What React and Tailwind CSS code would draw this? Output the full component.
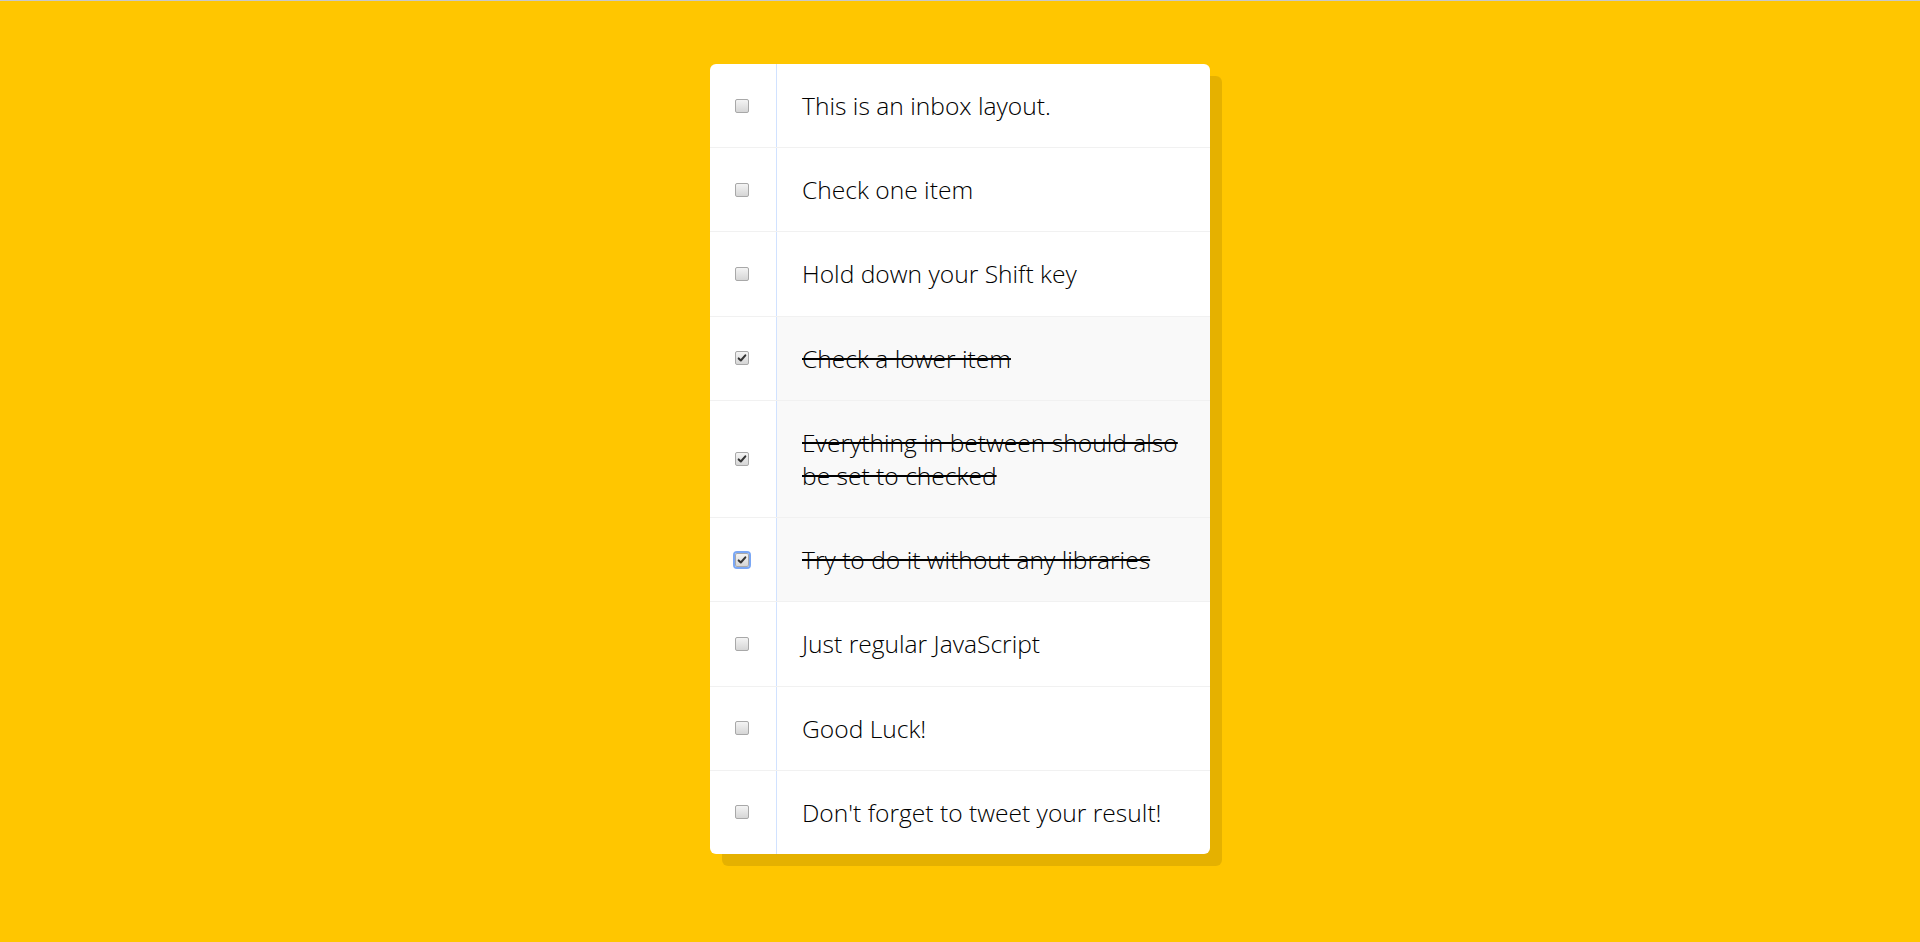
import { useState } from 'react';

const initialItems = [
  { id: 1, text: 'This is an inbox layout.', done: false },
  { id: 2, text: 'Check one item', done: false },
  { id: 3, text: 'Hold down your Shift key', done: false },
  { id: 4, text: 'Check a lower item', done: true },
  { id: 5, text: 'Everything in between should also be set to checked', done: true },
  { id: 6, text: 'Try to do it without any libraries', done: true, focused: true },
  { id: 7, text: 'Just regular JavaScript', done: false },
  { id: 8, text: 'Good Luck!', done: false },
  { id: 9, text: "Don't forget to tweet your result!", done: false },
];

function Checkbox({ checked, focused, onClick }) {
  return (
    <button
      onClick={onClick}
      className={`relative flex h-[14px] w-[14px] shrink-0 items-center justify-center rounded-[2px] border border-[#a8a8a8] bg-gradient-to-b from-[#f4f4f4] to-[#d6d6d6] ${
        focused ? 'outline outline-2 outline-[#7aa7f5]' : ''
      }`}
    >
      {checked && (
        <svg viewBox="0 0 12 12" className="h-[10px] w-[10px]">
          <path d="M2 6.5 L4.6 9 L10 2.8" fill="none" stroke="#333" strokeWidth="2.4" strokeLinecap="round" strokeLinejoin="round" />
        </svg>
      )}
    </button>
  );
}

export default function App() {
  const [items, setItems] = useState(initialItems);

  const toggle = (id) =>
    setItems((list) => list.map((it) => (it.id === id ? { ...it, done: !it.done } : it)));

  return (
    <div className="min-h-screen bg-[#ffc600] border-t border-[#c8c8c8] pt-[63px] pb-10 font-['Open_Sans',sans-serif]">
      {/* inbox card */}
      <div className="mx-auto w-[500px] rounded-[6px] bg-white shadow-[12px_12px_0_rgba(0,0,0,0.1)]">
        {items.map((item) => (
          <div key={item.id} className="flex items-center border-b border-[#f1f1f1] last:border-b-0">
            <div className="ml-[25px] mr-[27px] flex">
              <Checkbox checked={item.done} focused={item.focused} onClick={() => toggle(item.id)} />
            </div>
            <p
              className={`flex-1 border-l border-[#d1e2ff] px-[25px] py-[25px] text-[24.6px] leading-[33.2px] font-light text-black ${
                item.done ? 'bg-[#f9f9f9] line-through' : ''
              }`}
            >
              {item.text}
            </p>
          </div>
        ))}
      </div>
    </div>
  );
}
